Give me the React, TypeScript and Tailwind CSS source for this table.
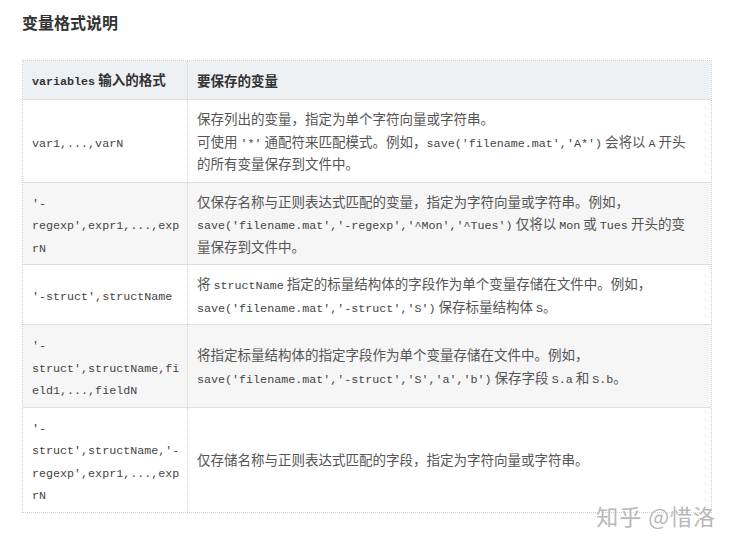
import React from "react";

const C: React.FC<{ children: React.ReactNode }> = ({ children }) => (
  <span className="font-['Liberation_Mono',monospace] text-[11.7px] text-[#444]">{children}</span>
);

const Lines: React.FC<{ lines: React.ReactNode[] }> = ({ lines }) => (
  <>
    {lines.map((l, i) => (
      <div key={i} className="h-[22.5px] whitespace-nowrap leading-[22.5px]">
        {l}
      </div>
    ))}
  </>
);

const rows: { left: React.ReactNode[]; right: React.ReactNode[]; gray?: boolean }[] = [
  {
    left: [<C>var1,...,varN</C>],
    right: [
      <>保存列出的变量，指定为单个字符向量或字符串。</>,
      <>
        可使用 <C>'*'</C> 通配符来匹配模式。例如，<C>save('filename.mat','A*')</C> 会将以 <C>A</C> 开头
      </>,
      <>的所有变量保存到文件中。</>,
    ],
  },
  {
    gray: true,
    left: [<C>'-</C>, <C>regexp',expr1,...,exp</C>, <C>rN</C>],
    right: [
      <>仅保存名称与正则表达式匹配的变量，指定为字符向量或字符串。例如，</>,
      <>
        <C>save('filename.mat','-regexp','^Mon','^Tues')</C> 仅将以 <C>Mon</C> 或 <C>Tues</C> 开头的变
      </>,
      <>量保存到文件中。</>,
    ],
  },
  {
    left: [<C>'-struct',structName</C>],
    right: [
      <>
        将 <C>structName</C> 指定的标量结构体的字段作为单个变量存储在文件中。例如，
      </>,
      <>
        <C>save('filename.mat','-struct','S')</C> 保存标量结构体 <C>S</C>。
      </>,
    ],
  },
  {
    gray: true,
    left: [<C>'-</C>, <C>struct',structName,fi</C>, <C>eld1,...,fieldN</C>],
    right: [
      <>将指定标量结构体的指定字段作为单个变量存储在文件中。例如，</>,
      <>
        <C>save('filename.mat','-struct','S','a','b')</C> 保存字段 <C>S.a</C> 和 <C>S.b</C>。
      </>,
    ],
  },
  {
    left: [<C>'-</C>, <C>struct',structName,'-</C>, <C>regexp',expr1,...,exp</C>, <C>rN</C>],
    right: [<>仅存储名称与正则表达式匹配的字段，指定为字符向量或字符串。</>],
  },
];

export default function App() {
  return (
    <div className="relative h-[543px] w-[738px] overflow-hidden bg-white pl-[22px] pt-[10px] font-['Noto_Sans_CJK_SC',sans-serif] text-[#555]">
      <h2 className="text-[16px] font-bold leading-[24px] text-[#333]">变量格式说明</h2>

      <div className="mt-[26px] w-[690px] border border-dotted border-[#cfcfcf] text-[13.5px]">
        <div className="flex h-[38px] items-center bg-[#eef1f4] font-bold text-[#333]">
          <div className="flex h-full w-[165px] shrink-0 items-center border-r border-dotted border-[#d4d4d4] px-[9px] whitespace-nowrap">
            <span>
              <span className="font-['Liberation_Mono',monospace] text-[11.7px]">variables</span> 输入的格式
            </span>
          </div>
          <div className="px-[9px]">要保存的变量</div>
        </div>
        {rows.map((r, i) => (
          <div
            key={i}
            className={`flex border-t border-[#dedede] ${r.gray ? "bg-[#f6f6f6]" : "bg-white"}`}
          >
            <div className="flex w-[165px] shrink-0 flex-col justify-center border-r border-dotted border-[#d4d4d4] px-[9px] py-[7px]">
              <Lines lines={r.left} />
            </div>
            <div className="flex flex-1 flex-col justify-center px-[9px] py-[7px]">
              <Lines lines={r.right} />
            </div>
          </div>
        ))}
      </div>

      <div className="absolute right-[22px] bottom-[14px] text-[22px] leading-[28px] tracking-[1px] text-[#b8b8b8] [text-shadow:0_0_2px_#fff]">
        知乎 @惜洛
      </div>
    </div>
  );
}
